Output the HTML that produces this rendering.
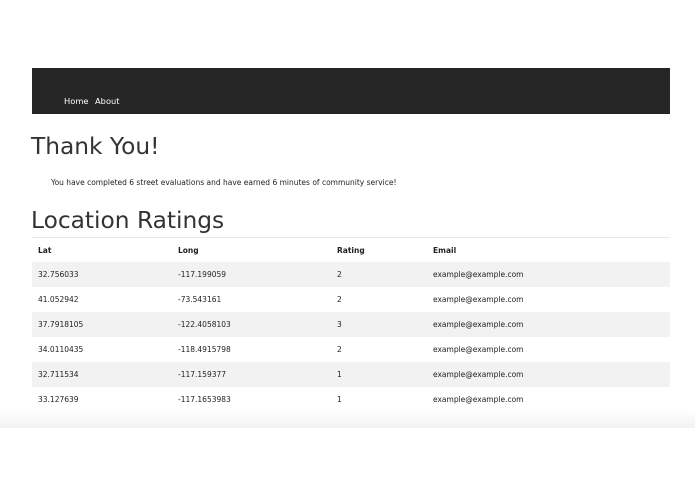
<!DOCTYPE html>
<html><head><style>
body{margin:0;width:695px;height:494px;background:#fff;font-family:"DejaVu Sans","Liberation Sans",sans-serif;color:#333;position:relative;overflow:hidden}
.nav{position:absolute;left:32px;top:68px;width:638px;height:46px;background:#262626}
.nav span{position:absolute;top:28px;font-size:8.3px;color:#fff}
h1{position:absolute;left:31px;margin:0;font-weight:normal;font-size:23.3px;line-height:30px;color:#333}
p{position:absolute;left:51px;top:178px;margin:0;font-size:7.5px;color:#222}
.hr{position:absolute;left:32px;top:237px;width:638px;height:1px;background:#e8e8e8}
.row{position:absolute;left:32px;width:638px;height:25px;font-size:7.5px;color:#222}
.row span{position:absolute;top:8px}
.g{background:#f2f2f2}
.fade{position:absolute;left:0;top:410px;width:695px;height:18px;background:linear-gradient(#fff,#f2f2f2)}
</style></head><body>
<div class="nav"><span style="left:32px">Home</span><span style="left:63px">About</span></div>
<h1 style="top:132px">Thank You!</h1>
<p>You have completed 6 street evaluations and have earned 6 minutes of community service!</p>
<h1 style="top:206px">Location Ratings</h1>
<div class="hr"></div>
<div class="row" style="top:238px;font-weight:bold"><span style="left:6px">Lat</span><span style="left:146px">Long</span><span style="left:305px">Rating</span><span style="left:401px">Email</span></div>
<div class="row g" style="top:262px"><span style="left:6px">32.756033</span><span style="left:146px">-117.199059</span><span style="left:305px">2</span><span style="left:401px">example@example.com</span></div>
<div class="row" style="top:287px"><span style="left:6px">41.052942</span><span style="left:146px">-73.543161</span><span style="left:305px">2</span><span style="left:401px">example@example.com</span></div>
<div class="row g" style="top:312px"><span style="left:6px">37.7918105</span><span style="left:146px">-122.4058103</span><span style="left:305px">3</span><span style="left:401px">example@example.com</span></div>
<div class="row" style="top:337px"><span style="left:6px">34.0110435</span><span style="left:146px">-118.4915798</span><span style="left:305px">2</span><span style="left:401px">example@example.com</span></div>
<div class="row g" style="top:362px"><span style="left:6px">32.711534</span><span style="left:146px">-117.159377</span><span style="left:305px">1</span><span style="left:401px">example@example.com</span></div>
<div class="row" style="top:387px"><span style="left:6px">33.127639</span><span style="left:146px">-117.1653983</span><span style="left:305px">1</span><span style="left:401px">example@example.com</span></div>
<div class="fade"></div>
</body></html>
